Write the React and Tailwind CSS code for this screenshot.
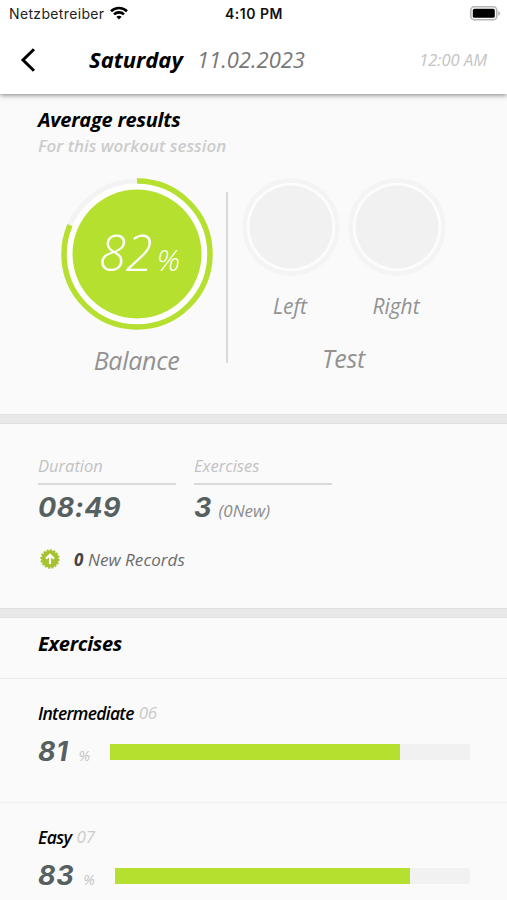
import React from "react";

function StatusBar() {
  return (
    <div className="flex h-[28px] items-center justify-between pl-[9px] pr-[6px] font-['Inter',sans-serif] text-[14px] leading-[28px] text-[#111] not-italic">
      <div className="flex w-[160px] items-center gap-[6px]">
        <span className="text-[14px] tracking-[0.35px] text-[#222]">Netzbetreiber</span>
        <svg className="-mt-[2px]" width="18" height="14" viewBox="0 0 18 14" fill="none" stroke="#000" strokeWidth="2.6">
          <path d="M1 5.2C5.4 0.9 12.6 0.9 17 5.2" />
          <path d="M4 8.4C6.8 5.7 11.2 5.7 14 8.4" />
          <path d="M6.4 10.8C7.9 9.4 10.1 9.4 11.6 10.8L9 13.4Z" fill="#000" stroke="none" />
        </svg>
      </div>
      <span className="-ml-[2px] font-semibold tracking-[0.5px]">4:10 PM</span>
      <div className="flex w-[160px] justify-end">
        <svg className="-mt-[2px]" width="31" height="15" viewBox="0 0 31 15">
          <rect x="0.8" y="0.8" width="26" height="13" rx="3.6" fill="#fff" stroke="#b5b5b5" strokeWidth="1.6" />
          <rect x="2.8" y="2.8" width="22" height="9" rx="1.6" fill="#000" />
          <path d="M28.4 5V9.8C30.4 9 30.4 5.8 28.4 5Z" fill="#aaa" />
        </svg>
      </div>
    </div>
  );
}

function Header() {
  return (
    <header className="relative z-10 h-[94px] bg-white shadow-[0_1px_5px_rgba(0,0,0,0.5)]">
      <StatusBar />
      <div className="flex h-[64px] items-center pl-[20px] pr-[20px]">
        <svg className="-mt-px" width="16" height="24" viewBox="0 0 16 24" fill="none" stroke="#000" strokeWidth="3">
          <path d="M14 1.2L3 12L14 22.8" />
        </svg>
        <span className="-mt-px ml-[53px] w-[108px] text-[22px] font-bold text-black">Saturday</span>
        <span className="-mt-px text-[22px] text-[#777]">11.02.2023</span>
        <span className="ml-auto text-[16.5px] text-[#c4c4c4]">12:00 AM</span>
      </div>
    </header>
  );
}

function EmptyGauge({ label }) {
  return (
    <div className="flex w-[98px] flex-col items-center">
      <svg width="98" height="98" viewBox="0 0 98 98">
        <circle cx="49" cy="49" r="46.5" fill="#fcfcfc" stroke="#f4f4f4" strokeWidth="4.5" />
        <circle cx="49" cy="49" r="41.5" fill="#f1f1f1" />
      </svg>
      <span className="-ml-[2px] mt-[15px] text-[21px] leading-[30px] text-[#929292]">{label}</span>
    </div>
  );
}

function Summary() {
  return (
    <section className="h-[320px] bg-[#fafafa] pt-[13px]">
      <h1 className="pl-[38px] text-[20px] font-bold leading-[26px] tracking-[-0.25px] text-black">Average results</h1>
      <p className="pl-[38px] text-[17px] font-semibold leading-[25px] text-[#ccc]">For this workout session</p>
      <div className="flex pl-[61px] pt-[20px]">
        <div className="flex w-[152px] flex-col items-center">
          <div className="grid">
            <svg className="col-start-1 row-start-1" width="152" height="152" viewBox="0 0 152 152">
              <circle cx="76" cy="76" r="73" fill="#fff" stroke="#f3f3f3" strokeWidth="5" />
              <circle cx="76" cy="76" r="73" fill="none" stroke="#b6e030" strokeWidth="5.5" pathLength="100" strokeDasharray="81.5 18.5" transform="rotate(-90 76 76)" />
              <circle cx="76" cy="76" r="64.5" fill="#b6e030" />
            </svg>
            <div className="z-10 col-start-1 row-start-1 flex h-[150px] items-baseline justify-center gap-[4px] pl-[4px] pt-[40px] font-light leading-[68px] text-white">
              <span className="text-[49px]">82</span>
              <span className="text-[30px] tracking-[-1px]">%</span>
            </div>
          </div>
          <span className="-ml-px mt-[13px] text-[25px] leading-[34px] tracking-[-0.3px] text-[#929292]">Balance</span>
        </div>
        <div className="ml-[13px] mt-[14px] h-[171px] w-[2px] bg-[#dadada]" />
        <div className="ml-[13px] flex w-[206px] flex-col items-center">
          <div className="flex gap-[8px]">
            <EmptyGauge label="Left" />
            <EmptyGauge label="Right" />
          </div>
          <span className="-ml-px mt-[20px] text-[25px] leading-[34px] tracking-[-0.2px] text-[#929292]">Test</span>
        </div>
      </div>
    </section>
  );
}

function Separator() {
  return <div className="h-[10px] border-y border-[#e0e0e0] bg-[#e8e8e8]" />;
}

function Stats() {
  return (
    <section className="h-[184px] bg-[#fafafa] px-[38px] pt-[29px]">
      <div className="flex gap-[18px]">
        <div className="w-[138px]">
          <div className="h-[32px] border-b-2 border-[#d6dad8] text-[16.5px] leading-[26px] text-[#c2c2c2]">Duration</div>
          <div className="font-['Inter',sans-serif] text-[27px] font-bold leading-[46px] tracking-[0.5px] text-[#566060]">08:49</div>
        </div>
        <div className="w-[138px]">
          <div className="h-[32px] border-b-2 border-[#d6dad8] text-[16.5px] leading-[26px] text-[#c2c2c2]">Exercises</div>
          <div className="flex items-baseline gap-[7px] leading-[46px]">
            <span className="font-['Inter',sans-serif] text-[27px] font-bold text-[#566060]">3</span>
            <span className="text-[17px] text-[#8c8c8c]">(0New)</span>
          </div>
        </div>
      </div>
      <div className="mt-[12px] flex h-[28px] items-center">
        <svg className="-mt-[2px] ml-[2px]" width="20" height="20" viewBox="0 0 20 20">
          <circle cx="10" cy="10" r="8.6" fill="#a5c331" />
          <circle cx="10" cy="10" r="8.8" fill="none" stroke="#a5c331" strokeWidth="1.8" pathLength="32" strokeDasharray="1.2 0.8" />
          <path d="M10 15V6M6 9.8L10 5.8L14 9.8" fill="none" stroke="#fff" strokeWidth="2.1" />
        </svg>
        <span className="ml-[14px] text-[17px] tracking-[0.05px] text-[#6c6c6c]"><b className="text-[#444]">0</b> New Records</span>
      </div>
    </section>
  );
}

function ExerciseRow({ name, number, value, fill, scoreWidth, unitGap, nameTracking, border }) {
  return (
    <div className={"h-[124px] border-t pl-[38px] pr-[37px] pt-[20px] " + border}>
      <div className="flex gap-[5px] text-[17.5px] leading-[28px]">
        <span className={"font-semibold text-black " + nameTracking}>{name}</span>
        <span className="text-[17px] tracking-[-0.2px] text-[#cacaca]">{number}</span>
      </div>
      <div className="mt-[6px] flex h-[38px] items-center">
        <div className={"flex items-baseline leading-[38px] " + scoreWidth + " " + unitGap}>
          <span className="mt-[4px] font-['Inter',sans-serif] text-[27px] font-bold tracking-[0.6px] text-[#566060]">{value}</span>
          <span className="text-[14.5px] text-[#c4c4c4]">%</span>
        </div>
        <div className="h-[16px] flex-1 rounded-r-[3px] bg-[#f1f1f1]">
          <div className="h-full bg-[#b6e030]" style={{ width: fill + "%" }} />
        </div>
      </div>
    </div>
  );
}

export default function App() {
  return (
    <div className="h-[900px] w-[507px] overflow-hidden whitespace-nowrap bg-[#fafafa] font-['Open_Sans',sans-serif] italic">
      <Header />
      <main>
        <Summary />
        <Separator />
        <Stats />
        <Separator />
        <section>
          <h2 className="h-[60px] pl-[38px] pt-[12px] text-[20px] font-bold leading-[28px] tracking-[-0.3px] text-black">Exercises</h2>
          <ExerciseRow name="Intermediate" number="06" value="81" fill={80.7} scoreWidth="w-[71.5px]" unitGap="gap-[10px]" nameTracking="tracking-[-0.7px]" border="border-[#ececec]" />
          <ExerciseRow name="Easy" number="07" value="83" fill={83.2} scoreWidth="w-[77px]" unitGap="gap-[9px]" nameTracking="tracking-[-0.6px]" border="border-[#f1f1f1]" />
        </section>
      </main>
    </div>
  );
}
